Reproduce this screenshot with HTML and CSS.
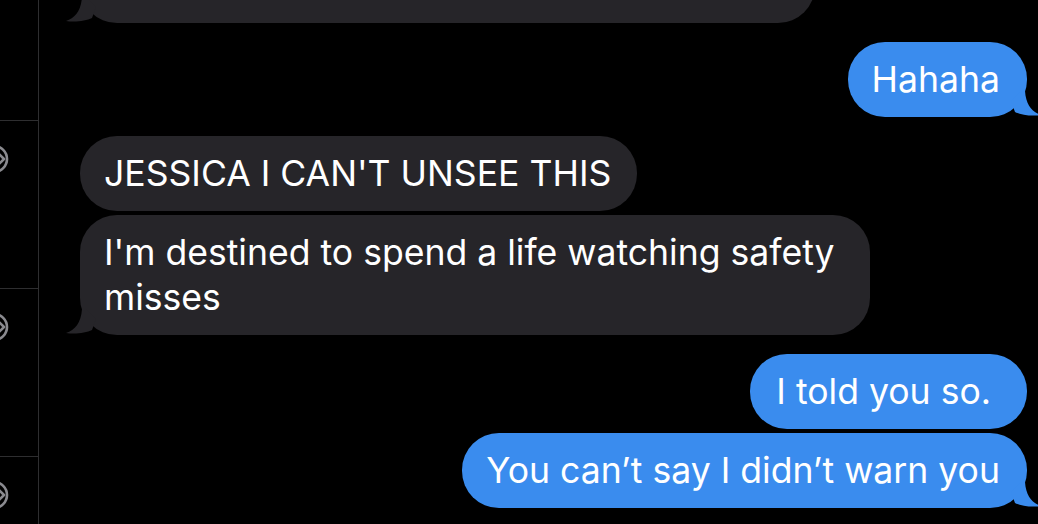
FILE: index.html
```html
<!DOCTYPE html>
<html>
<head>
<meta charset="utf-8">
<link rel="stylesheet" href="styles.css">
</head>
<body>
<div class="app">
  <aside class="sidebar">
    <div class="cell first"></div>
    <div class="cell"><svg class="ico" width="12" height="34" viewBox="0 0 12 34"><circle cx="-6" cy="17" r="13" fill="none" stroke="#8a8a8f" stroke-width="2.6"/><path d="M-3 10 L4 17 L-3 24" fill="none" stroke="#8a8a8f" stroke-width="2.6" stroke-linecap="round" stroke-linejoin="round"/></svg></div>
    <div class="cell"><svg class="ico" width="12" height="34" viewBox="0 0 12 34"><circle cx="-6" cy="17" r="13" fill="none" stroke="#8a8a8f" stroke-width="2.6"/><path d="M-3 10 L4 17 L-3 24" fill="none" stroke="#8a8a8f" stroke-width="2.6" stroke-linecap="round" stroke-linejoin="round"/></svg></div>
    <div class="cell last"><svg class="ico" width="12" height="34" viewBox="0 0 12 34"><circle cx="-6" cy="17" r="13" fill="none" stroke="#8a8a8f" stroke-width="2.6"/><path d="M-3 10 L4 17 L-3 24" fill="none" stroke="#8a8a8f" stroke-width="2.6" stroke-linecap="round" stroke-linejoin="round"/></svg></div>
  </aside>
  <main class="chat">
    <div class="bubble recv cut"><svg class="tail tail-l" width="36" height="26" viewBox="0 0 36 26"><path d="M16 0 C15 14 9 21 0 24 C9 25.5 20 24 26 21 L30 10 L20 0 Z"/></svg></div>
    <div class="bubble sent spaced">Hahaha<svg class="tail tail-r" width="36" height="26" viewBox="0 0 36 26"><path d="M16 0 C15 14 9 21 0 24 C9 25.5 20 24 26 21 L30 10 L20 0 Z"/></svg></div>
    <div class="bubble recv">JESSICA I CAN'T UNSEE THIS</div>
    <div class="bubble recv wide spaced">I'm destined to spend a life watching safety misses<svg class="tail tail-l" width="36" height="26" viewBox="0 0 36 26"><path d="M16 0 C15 14 9 21 0 24 C9 25.5 20 24 26 21 L30 10 L20 0 Z"/></svg></div>
    <div class="bubble sent extra-r">I told you so.</div>
    <div class="bubble sent">You can’t say I didn’t warn you<svg class="tail tail-r" width="36" height="26" viewBox="0 0 36 26"><path d="M16 0 C15 14 9 21 0 24 C9 25.5 20 24 26 21 L30 10 L20 0 Z"/></svg></div>
  </main>
</div>
</body>
</html>
```

FILE: styles.css
```css
html, body {
  margin: 0;
  padding: 0;
  background: #000;
  height: 100%;
  overflow: hidden;
}

.app {
  display: flex;
  width: 1038px;
  height: 524px;
  overflow: hidden;
  font-family: Inter, "Liberation Sans", sans-serif;
}

.sidebar {
  width: 38px;
  flex: none;
  border-right: 1px solid #2e2e30;
  display: flex;
  flex-direction: column;
}

.cell {
  flex: none;
  height: 168px;
  border-bottom: 1px solid #2e2e30;
  padding-top: 21px;
  box-sizing: border-box;
}

.cell.first {
  height: 121px;
  padding-top: 0;
}

.cell.last {
  flex: 1;
  height: auto;
  min-height: 0;
  border-bottom: none;
}

.ico {
  display: block;
  overflow: hidden;
}

.chat {
  flex: 1;
  display: flex;
  flex-direction: column;
  padding: 0 11px 0 41px;
  overflow: hidden;
}

.bubble {
  position: relative;
  flex: none;
  font-size: 35.6px;
  line-height: 45px;
  padding: 15px 26px 15px 24px;
  border-radius: 37px;
  color: #fff;
  box-sizing: border-box;
  margin-top: 4px;
}

.recv {
  align-self: flex-start;
  background: #262529;
}

.sent {
  align-self: flex-end;
  background: #3a8cee;
  padding-right: 27px;
}

.sent.extra-r {
  padding-left: 26px;
  padding-right: 36px;
}

.spaced {
  margin-bottom: 15px;
}

.cut {
  width: 735px;
  height: 75px;
  margin-top: -52px;
  margin-bottom: 15px;
}

.wide {
  width: 790px;
  padding-right: 22px;
}

.tail {
  position: absolute;
  bottom: 0;
  display: block;
}

.tail-l {
  left: -14px;
  fill: #262529;
}

.tail-r {
  right: -14px;
  fill: #3a8cee;
  transform: scaleX(-1);
}
```
